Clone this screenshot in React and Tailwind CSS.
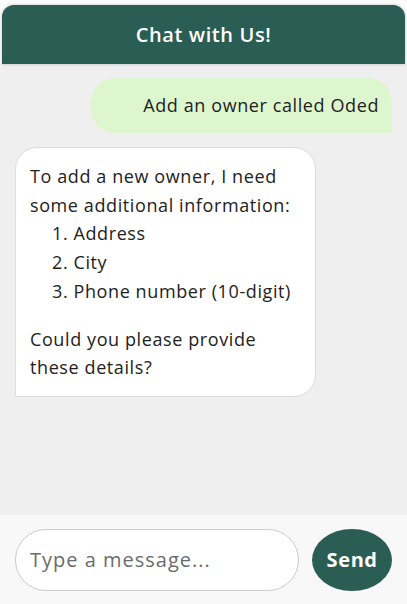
export default function App() {
  const font = { fontFamily: '"Open Sans", "Noto Sans", sans-serif' };
  return (
    <div className="w-[407px] h-[604px] bg-[#fbfbfb] flex flex-col overflow-hidden tracking-[0.6px]" style={font}>
      <div className="mt-[5px] mx-[2px] h-[59px] shrink-0 bg-[#2a5d54] rounded-t-[12px] flex items-center justify-center shadow-[0_0_3px_rgba(0,0,0,0.25)] relative z-10">
        <span className="text-white text-[20px] font-semibold">Chat with Us!</span>
      </div>
      <div className="flex-1 bg-[#efefef] px-[15px] pt-[14px] flex flex-col gap-[14px]">
        <div className="self-end w-[301px] bg-[#def6ce] rounded-[24px] rounded-br-none px-[13px] py-[13px] text-right text-[18px] leading-[29px] text-[#222]">
          Add an owner called Oded
        </div>
        <div className="self-start w-[301px] bg-white border border-[#dcdcdc] rounded-[22px] rounded-bl-none px-[14px] py-[14px] text-[18px] leading-[28.7px] text-[#222]">
          <div>To add a new owner, I need some additional information:</div>
          <div className="pl-[22px]">1. Address</div>
          <div className="pl-[22px]">2. City</div>
          <div className="pl-[22px]">3. Phone number (10-digit)</div>
          <div className="mt-[19px]">Could you please provide these details?</div>
        </div>
      </div>
      <div className="h-[89px] shrink-0 bg-[#f8f8f8] flex items-center px-[15px] gap-[13px]">
        <div className="w-[285px] h-[62px] rounded-full border border-[#cccccc] bg-white flex items-center px-[14px] text-[20px] tracking-[1px] text-[#6b6b6b]">
          Type a message...
        </div>
        <div className="w-[80px] h-[62px] rounded-[50%] bg-[#2a5d54] flex items-center justify-center text-white text-[20px] font-bold">
          Send
        </div>
      </div>
    </div>
  );
}
